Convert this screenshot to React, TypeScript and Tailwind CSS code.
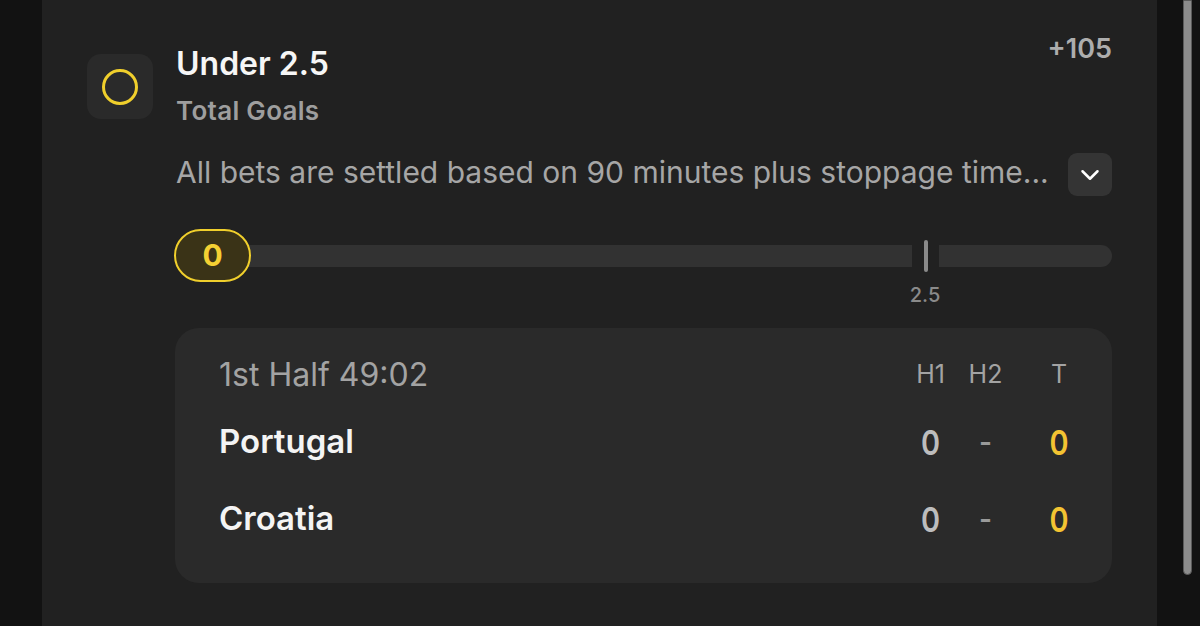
import { ChevronDown } from 'lucide-react';

const font = { fontFamily: 'Inter, "Noto Sans", sans-serif' };

// Score row for one team: name on the left, H1 / dash / total on the right
function TeamRow({ name, h1, total, className }: { name: string; h1: string; total: string; className?: string }) {
  return (
    <div className={`flex items-center h-[48px] ${className ?? ''}`}>
      <div className="flex-1 text-[33px] font-semibold text-[#f4f4f4]">{name}</div>
      <div className="w-[55px] text-center text-[34px] font-semibold text-[#bdbdbd] scale-x-[0.85]">{h1}</div>
      <div className="w-[55px] text-center text-[28px] font-semibold text-[#9a9a9a]">-</div>
      <div className="w-[50px] ml-[21px] text-center text-[34px] font-semibold text-[#f3c332] scale-x-[0.85]">{total}</div>
    </div>
  );
}

export default function App() {
  return (
    <div className="w-[1200px] h-[626px] bg-[#121212] flex overflow-hidden" style={font}>
      {/* Bet panel */}
      <div className="ml-[42px] w-[1115px] h-full bg-[#212121] px-[45px] pt-[34px]">
        <div className="flex">
          {/* Selection indicator */}
          <div className="mt-[20px] w-[66px] h-[65px] rounded-[14px] bg-[#2a2a2a] flex items-center justify-center shrink-0">
            <div className="w-[36px] h-[36px] rounded-full border-[3px] border-[#f0cf2c]" />
          </div>

          <div className="flex-1 ml-[23px]">
            {/* Header */}
            <div className="flex items-start justify-between">
              <div className="mt-[12px]">
                <div className="text-[32px] leading-[36px] font-semibold text-[#f6f6f6]">Under 2.5</div>
                <div className="mt-[14px] text-[26px] leading-[30px] font-semibold text-[#9e9e9e] tracking-[0.3px]">Total Goals</div>
              </div>
              <div className="text-[27px] leading-[30px] font-semibold text-[#adadad]">+105</div>
            </div>

            {/* Description */}
            <div className="mt-[27px] flex items-center justify-between h-[43px]">
              <div className="-mt-[6px] text-[30px] leading-[36px] text-[#a6a6a6]">
                All bets are settled based on 90 minutes plus stoppage time...
              </div>
              <button className="w-[44px] h-[43px] rounded-[9px] bg-[#343434] flex items-center justify-center">
                <ChevronDown className="w-[30px] h-[30px] text-white" strokeWidth={2} />
              </button>
            </div>

            {/* Goal line slider */}
            <div className="mt-[33px] relative h-[53px] flex items-center">
              <div className="flex-1 h-[22px] bg-[#323232] rounded-l-full" />
              <div className="w-[27px] h-[22px] flex items-center justify-center">
                <div className="w-[4px] h-[32px] rounded-full bg-[#8a8a8a]" />
              </div>
              <div className="w-[173px] h-[22px] bg-[#323232] rounded-r-full" />
              <div className="absolute left-[-2px] top-0 w-[77px] h-[53px] rounded-full border-[2.5px] border-[#f0cf2c] bg-[#3a3317] flex items-center justify-center">
                <span className="text-[30px] font-bold text-[#f4d033]">0</span>
              </div>
            </div>
            <div className="flex justify-end">
              <div className="w-[60px] mr-[157px] text-center text-[20px] leading-[26px] font-medium text-[#8a8a8a]">2.5</div>
            </div>

            {/* Live score card */}
            <div className="mt-[20px] ml-[-1px] h-[255px] rounded-[24px] bg-[#2a2a2a] pl-[44px] pr-[28px] pt-[27px]">
              <div className="flex items-center h-[40px]">
                <div className="flex-1 text-[32px] text-[#a3a3a3]">1st Half 49:02</div>
                <div className="w-[55px] text-center text-[25px] text-[#a3a3a3]">H1</div>
                <div className="w-[55px] text-center text-[25px] text-[#a3a3a3]">H2</div>
                <div className="w-[50px] ml-[21px] text-center text-[25px] text-[#a3a3a3]">T</div>
              </div>
              <TeamRow name="Portugal" h1="0" total="0" className="mt-[23px]" />
              <TeamRow name="Croatia" h1="0" total="0" className="mt-[29px]" />
            </div>
          </div>
        </div>
      </div>

      {/* Scrollbar */}
      <div className="ml-[26px] w-[9px] h-[575px] rounded-b-full bg-[#8c8c8c] border border-[#5a5a5a]" />
    </div>
  );
}
